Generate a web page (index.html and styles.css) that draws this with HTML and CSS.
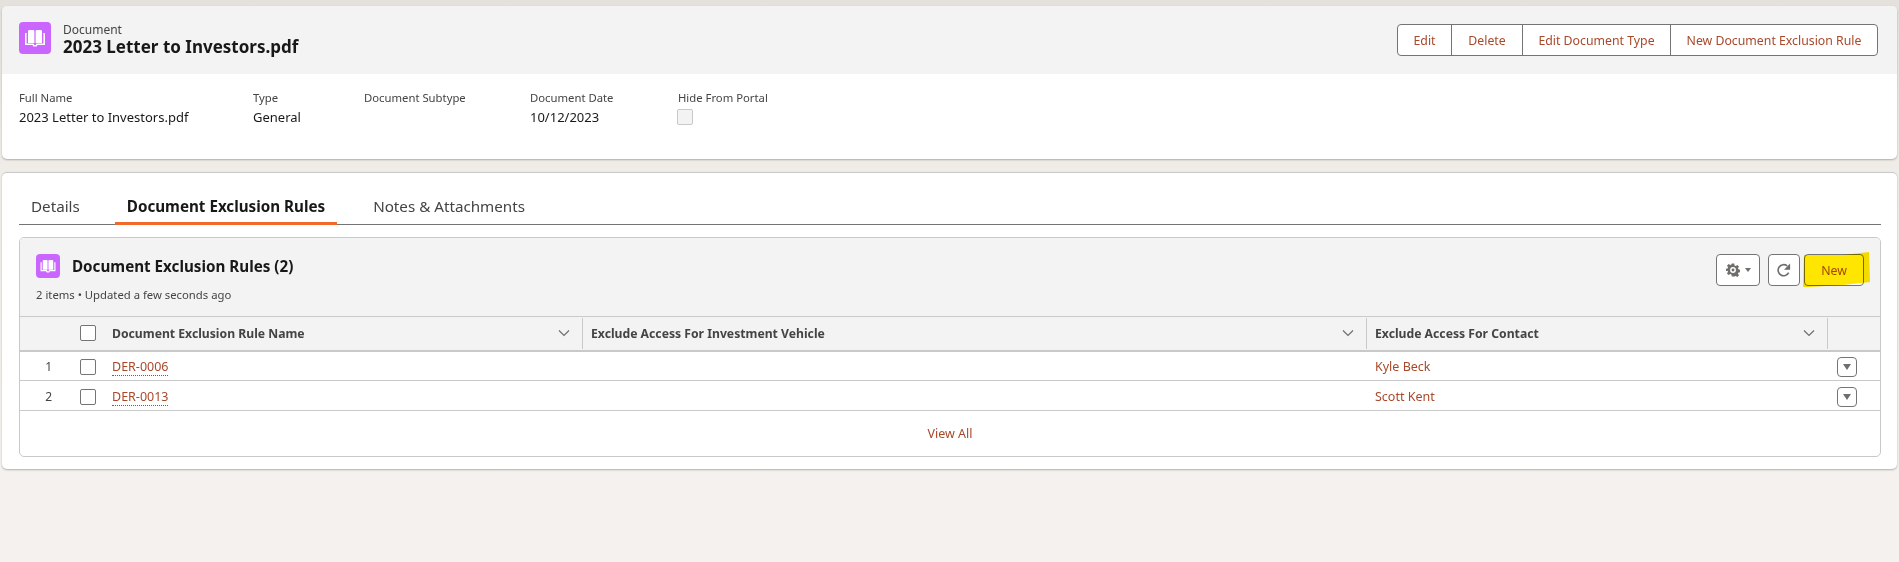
FILE: index.html
```html
<!DOCTYPE html>
<html lang="en">
<head>
    <meta charset="UTF-8">
    <meta name="viewport" content="width=device-width, initial-scale=1.0">
    <title>2023 Letter to Investors.pdf</title>
    <link rel="stylesheet" href="styles.css">
</head>
<body>
    <svg class="icon-defs" width="0" height="0">
        <symbol id="book" viewBox="0 0 32 32">
            <path fill="#fff" d="M9 9.500c0-.8.6-1.500 1.400-1.500h4.100c.5 0 .9.400.9.900v12.100H9zM16.600 8.900c0-.5.4-.9.900-.9h4.100c.8 0 1.400.7 1.400 1.500V21h-6.400z"/>
            <path fill="none" stroke="#fff" stroke-width="1.600" d="M6.800 11v11.200H14l.8 1.600h2.400l.8-1.600h7.200V11"/>
        </symbol>
    </svg>

    <section class="card record">
        <div class="record-head">
            <svg class="obj-icon"><use href="#book"/></svg>
            <div class="record-titles">
                <div class="record-type">Document</div>
                <h1 class="record-name">2023 Letter to Investors.pdf</h1>
            </div>
            <div class="btn-group">
                <button class="group-btn btn-edit">Edit</button>
                <button class="group-btn btn-delete">Delete</button>
                <button class="group-btn btn-type">Edit Document Type</button>
                <button class="group-btn btn-rule">New Document Exclusion Rule</button>
            </div>
        </div>
        <div class="fields">
            <div class="field field-name">
                <div class="field-label">Full Name</div>
                <div class="field-value">2023 Letter to Investors.pdf</div>
            </div>
            <div class="field field-type">
                <div class="field-label">Type</div>
                <div class="field-value">General</div>
            </div>
            <div class="field field-subtype">
                <div class="field-label">Document Subtype</div>
            </div>
            <div class="field field-date">
                <div class="field-label">Document Date</div>
                <div class="field-value">10/12/2023</div>
            </div>
            <div class="field">
                <div class="field-label">Hide From Portal</div>
                <div class="field-check"></div>
            </div>
        </div>
    </section>

    <section class="card related">
        <div class="tabs">
            <div class="tab">Details</div>
            <div class="tab active">Document Exclusion Rules</div>
            <div class="tab">Notes &amp; Attachments</div>
        </div>

        <div class="list-card">
            <div class="list-head">
                <div class="list-title-block">
                    <div class="list-title-row">
                        <svg class="list-icon"><use href="#book"/></svg>
                        <h2 class="list-title">Document Exclusion Rules (2)</h2>
                    </div>
                    <div class="list-meta">2 items • Updated a few seconds ago</div>
                </div>
                <div class="list-actions">
                    <button class="icon-btn gear-btn">
                        <svg width="14" height="14" viewBox="0 0 24 24">
                            <path fill="#706e6b" fill-rule="evenodd" d="M10 1h4l.7 3.200 2 .9 2.800-1.800 2.800 2.800-1.800 2.800.9 2 3.200.7v4l-3.200.7-.9 2 1.800 2.800-2.800 2.800-2.800-1.800-2 .9L14 23h-4l-.7-3.200-2-.9-2.800 1.800-2.800-2.800 1.800-2.800-.9-2L-.6 14v-4l3.200-.7.9-2L1.700 4.500l2.800-2.800 2.800 1.800 2-.9zM12 7a5 5 0 1 0 0 10 5 5 0 0 0 0-10zm0 2.500a2.500 2.500 0 1 1 0 5 2.500 2.500 0 0 1 0-5z"/>
                        </svg>
                        <span class="caret"></span>
                    </button>
                    <button class="icon-btn refresh-btn">
                        <svg width="14" height="14" viewBox="0 0 24 24">
                            <path fill="none" stroke="#706e6b" stroke-width="2.800" d="M20 16.500A9.500 9.500 0 1 1 17.500 5"/>
                            <path fill="#706e6b" d="M22.500 1v10.500H12z"/>
                        </svg>
                    </button>
                    <div class="new-wrap">
                        <button class="new-btn">New</button>
                        <svg class="marker" viewBox="0 0 67 35" preserveAspectRatio="none">
                            <path fill="#ffe600" d="M1 3 L40 3 L66 0 L67 30 L40 33 L5 35 L0 35z"/>
                        </svg>
                    </div>
                </div>
            </div>

            <table class="rules">
                <colgroup>
                    <col class="col-num">
                    <col class="col-check">
                    <col class="col-name">
                    <col class="col-vehicle">
                    <col class="col-contact">
                    <col>
                </colgroup>
                <thead>
                    <tr>
                        <th></th>
                        <th><span class="check"></span></th>
                        <th>
                            <div class="th-inner">Document Exclusion Rule Name
                                <svg class="chev" viewBox="0 0 12 8"><path d="M1 1.500l5 5 5-5"/></svg>
                            </div>
                        </th>
                        <th>
                            <div class="th-inner">Exclude Access For Investment Vehicle
                                <svg class="chev" viewBox="0 0 12 8"><path d="M1 1.500l5 5 5-5"/></svg>
                            </div>
                        </th>
                        <th>
                            <div class="th-inner">Exclude Access For Contact
                                <svg class="chev" viewBox="0 0 12 8"><path d="M1 1.500l5 5 5-5"/></svg>
                            </div>
                        </th>
                        <th></th>
                    </tr>
                </thead>
                <tbody>
                    <tr>
                        <td class="num">1</td>
                        <td><span class="check"></span></td>
                        <td class="name"><a class="dotted">DER-0006</a></td>
                        <td></td>
                        <td class="name contact"><a>Kyle Beck</a></td>
                        <td><button class="row-btn"><span class="row-caret"></span></button></td>
                    </tr>
                    <tr>
                        <td class="num">2</td>
                        <td><span class="check"></span></td>
                        <td class="name"><a class="dotted">DER-0013</a></td>
                        <td></td>
                        <td class="name contact"><a>Scott Kent</a></td>
                        <td><button class="row-btn"><span class="row-caret"></span></button></td>
                    </tr>
                </tbody>
            </table>

            <div class="view-all"><a>View All</a></div>
        </div>
    </section>
</body>
</html>
```

FILE: styles.css
```css
* {
    margin: 0;
    padding: 0;
    box-sizing: border-box;
}

html {
    height: 100%;
    overflow: hidden;
}

body {
    font-family: "Noto Sans", "Open Sans", sans-serif;
    font-size: 12px;
    color: #181818;
    height: 100%;
    overflow: hidden;
    padding: 6px 2px 0;
    background: linear-gradient(#e4e0db 0, #f0ece8 170px, #f4f1ee 480px);
}

button {
    font-family: inherit;
    cursor: pointer;
}

.icon-defs {
    position: absolute;
}

.card {
    background: white;
    border-radius: 5px;
    box-shadow: 0 1px 2px rgba(0, 0, 0, 0.28);
}

/* record header */
.record {
    height: 153px;
}

.record-head {
    height: 68px;
    background: #f3f3f3;
    border-radius: 5px 5px 0 0;
    padding: 16px 19px 0 17px;
    display: flex;
    align-items: flex-start;
}

.obj-icon {
    width: 32px;
    height: 32px;
    background: #cb65ff;
    border-radius: 4px;
    flex: none;
}

.record-titles {
    margin-left: 12px;
    flex: 1;
}

.record-type {
    font-size: 12px;
    line-height: 15px;
    color: #444;
}

.record-name {
    font-size: 17px;
    font-weight: 700;
    line-height: 20px;
}

.btn-group {
    display: flex;
    height: 32px;
    margin-top: 2px;
    background: white;
    border: 1px solid #747474;
    border-radius: 4px;
}

.group-btn {
    background: none;
    border: none;
    border-left: 1px solid #747474;
    color: #a8492a;
    font-size: 12.3px;
}

.group-btn:first-child {
    border-left: none;
}

.btn-edit { width: 53px; }
.btn-delete { width: 71px; }
.btn-type { width: 148px; }
.btn-rule { width: 207px; }

.fields {
    display: flex;
    padding: 16px 0 0 17px;
}

.field {
    font-size: 12px;
}

.field-name { width: 234px; }
.field-type { width: 111px; }
.field-subtype { width: 166px; }
.field-date { width: 148px; }

.field-label {
    line-height: 16px;
    color: #444;
    font-size: 11.3px;
}

.field-value {
    margin-top: 1px;
    line-height: 20px;
    font-size: 13px;
}

.field-check {
    width: 16px;
    height: 16px;
    margin-top: 3px;
    margin-left: -1px;
    background: #f3f3f3;
    border: 1px solid #c9c9c9;
    border-radius: 2px;
}

/* related list */
.related {
    margin-top: 13px;
    height: 297px;
    padding: 0 16px 0 17px;
    border-top: 1px solid #c9c9c9;
}

.tabs {
    display: flex;
    height: 52px;
    padding-top: 16px;
    border-bottom: 1px solid #747474;
}

.tab {
    padding: 0 12px;
    font-size: 15.200px;
    line-height: 34px;
    height: 36px;
    color: #444;
}

.tab.active {
    color: #181818;
    font-size: 15.200px;
    font-weight: 700;
    border-bottom: 3px solid #f06a2b;
    margin: 0 24px 0 23px;
    padding: 0 12px;
}

.list-card {
    margin-top: 12px;
    height: 220px;
    border: 1px solid #c9c9c9;
    border-radius: 5px;
    background: white;
    overflow: hidden;
}

.list-head {
    height: 78px;
    background: #f3f3f3;
    display: flex;
    justify-content: space-between;
    padding: 16px 16px 0 16px;
}

.list-title-row {
    display: flex;
    align-items: center;
    gap: 12px;
}

.list-icon {
    width: 24px;
    height: 24px;
    background: #cb65ff;
    border-radius: 4px;
    flex: none;
}

.list-title {
    font-size: 15.200px;
    font-weight: 700;
}

.list-meta {
    margin-top: 9px;
    font-size: 11.300px;
    line-height: 16px;
    color: #444;
}

.list-actions {
    display: flex;
    height: 32px;
}

.icon-btn {
    height: 32px;
    background: white;
    border: 1px solid #747474;
    border-radius: 4px;
    display: flex;
    align-items: center;
    justify-content: center;
}

.gear-btn {
    width: 44px;
    gap: 5px;
}

.caret {
    border-left: 3.500px solid transparent;
    border-right: 3.500px solid transparent;
    border-top: 4px solid #706e6b;
}

.refresh-btn {
    width: 32px;
    margin-left: 8px;
}

.new-wrap {
    position: relative;
    width: 60px;
    margin-left: 4px;
}

.new-btn {
    width: 60px;
    height: 32px;
    background: white;
    border: 1px solid #747474;
    border-radius: 4px;
    color: #a8492a;
    font-size: 12.3px;
}

/* highlighter stroke over the button */
.marker {
    position: absolute;
    left: -1px;
    top: -2px;
    width: 67px;
    height: 35px;
    mix-blend-mode: multiply;
}

.rules {
    width: 100%;
    border-collapse: collapse;
    table-layout: fixed;
}

.col-num { width: 45px; }
.col-check { width: 47px; }
.col-name { width: 471px; }
.col-vehicle { width: 784px; }
.col-contact { width: 461px; }

.rules th {
    height: 34px;
    background: #f3f3f3;
    border-top: 1px solid #c9c9c9;
    border-bottom: 2px solid #c9c9c9;
    font-size: 12.200px;
    font-weight: 700;
    color: #444;
    text-align: left;
    padding: 0;
}

.rules th .check {
    margin-left: 15px;
}

.th-inner {
    height: 31px;
    display: flex;
    align-items: center;
    justify-content: space-between;
    padding: 0 12px 0 8px;
    border-right: 1px solid #c9c9c9;
}

.rules th:nth-child(3) .th-inner {
    padding-left: 0;
}

.chev {
    width: 12px;
    height: 8px;
    fill: none;
    stroke: #706e6b;
    stroke-width: 1.200;
}

.rules td {
    height: 30px;
    border-bottom: 1px solid #c9c9c9;
    padding: 2px 0 0;
}

.rules td.num {
    text-align: right;
    padding-right: 13px;
    color: #444;
    font-size: 12px;
}

.check {
    display: block;
    width: 16px;
    height: 16px;
    margin-left: 15px;
    background: white;
    border: 1px solid #747474;
    border-radius: 2px;
}

.name a,
.view-all a {
    color: #a8492a;
    font-size: 12.500px;
}

.rules td.contact {
    padding-left: 8px;
}

.dotted {
    border-bottom: 1px dotted #a8492a;
}

.row-btn {
    display: flex;
    align-items: center;
    justify-content: center;
    width: 20px;
    height: 20px;
    margin-left: 9px;
    background: white;
    border: 1px solid #747474;
    border-radius: 4px;
}

.row-caret {
    border-left: 4.500px solid transparent;
    border-right: 4.500px solid transparent;
    border-top: 6px solid #706e6b;
}

.view-all {
    text-align: center;
    line-height: 46px;
}
```
